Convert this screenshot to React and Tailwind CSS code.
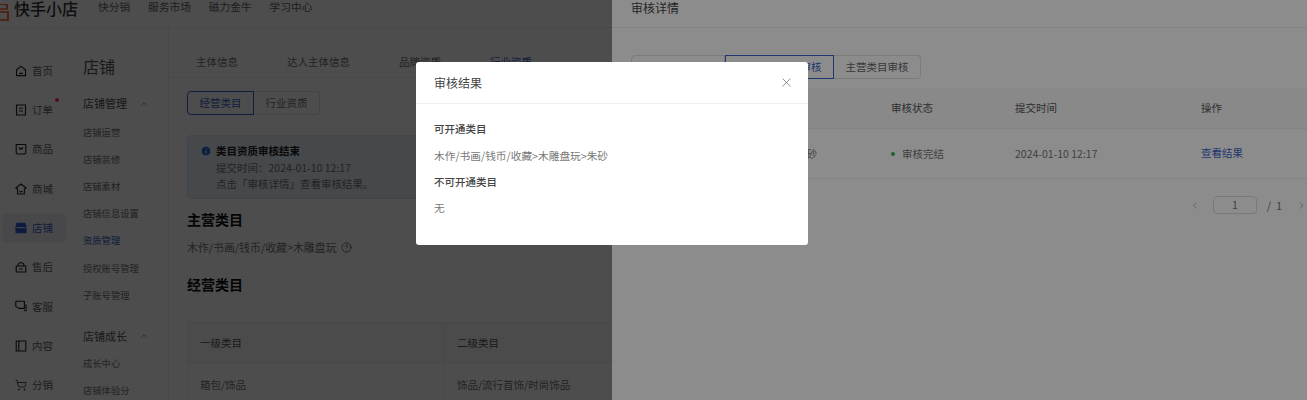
import { ShoppingCart, ChevronUp, ChevronLeft, ChevronRight, X, Info, CircleHelp } from 'lucide-react';

const FONT = 'font-["Noto_Sans_CJK_SC","Noto_Sans",sans-serif]';

// sidebar icons drawn to follow the reference's strokes
function Glyph({ children, filled }) {
  return (
    <svg width="12" height="12" viewBox="0 0 12 12" fill="none" stroke={filled ? '#2a5bd0' : '#222'} strokeWidth="1.1" strokeLinejoin="round" className="shrink-0">
      {children}
    </svg>
  );
}

const HomeIcon = () => <Glyph><path d="M1.5 5 6 1.2 10.5 5v5.6h-9zM4.2 8.4h3.6" /></Glyph>;
const OrderIcon = () => <Glyph><path d="M1.5 1h9v10h-9zM4 4.2h4M4 7h4" /></Glyph>;
const GoodsIcon = () => <Glyph><path d="M1.2 1.5h9.6v8l-1 1.5H2.2l-1-1.5zM4 4.5 6 6.5l2-2" /></Glyph>;
const MallIcon = () => <Glyph><path d="M.8 5 6 1l5.2 4-1.8 1v5H2.6V6zM4.6 8.6h2.8" /></Glyph>;
const ShopIcon = () => <Glyph filled><path d="M2 1.2h8l1 4v5.6H1V5.2z" fill="#2a5bd0" /><path d="M1.5 5.6h9" stroke="#dfe5f2" /></Glyph>;
const AfterIcon = () => <Glyph><path d="M1.2 5h9.6v6H1.2zM3.2 5V3.2Q6-.2 8.8 3.2V5M4.2 8h3.6" /></Glyph>;
const ServiceIcon = () => <Glyph><path d="M.8 1.2h8.6v7.2H3.8L.8 6.4zM11 4.5v6.3H9" /></Glyph>;
const ContentIcon = () => <Glyph><path d="M1.2 1h9.6v10H1.2zM3.8 1v10" /></Glyph>;
const CartIcon = () => <ShoppingCart size={12} strokeWidth={1.5} className="text-[#222] shrink-0" />;

const sideItems = [
  { label: '首页', Icon: HomeIcon },
  { label: '订单', Icon: OrderIcon, dot: true },
  { label: '商品', Icon: GoodsIcon },
  { label: '商城', Icon: MallIcon },
  { label: '店铺', Icon: ShopIcon, active: true },
  { label: '售后', Icon: AfterIcon },
  { label: '客服', Icon: ServiceIcon },
  { label: '内容', Icon: ContentIcon },
  { label: '分销', Icon: CartIcon },
];

const navLinks = ['快分销', '服务市场', '磁力金牛', '学习中心'];
const subItems = ['店铺运营', '店铺装修', '店铺素材', '店铺信息设置', '资质管理', '授权账号管理', '子账号管理'];

function Sidebar() {
  return (
    <div className="w-[70px] shrink-0 pt-[23px] pl-[2px]">
      {sideItems.map(({ label, Icon, dot, active }) => (
        <div key={label} className="h-[39.3px] flex items-center">
          <div className={`relative w-[64px] h-[30px] rounded-md flex items-center pl-[13px] gap-[5px] ${active ? 'bg-[#eef1f8]' : ''}`}>
            <Icon />
            <span className={`text-[10.5px] ${active ? 'text-[#3a63c8]' : 'text-[#666]'}`}>{label}</span>
            {dot && <span className="absolute left-[53px] top-[3px] w-[4px] h-[4px] rounded-full bg-[#fe3666]" />}
          </div>
        </div>
      ))}
    </div>
  );
}

function NavGroup({ title }) {
  return (
    <div className="h-[27px] flex items-center gap-[12px] text-[11px] text-[#555]">
      {title}
      <ChevronUp size={10} className="text-[#888]" />
    </div>
  );
}

function SubNav() {
  return (
    <div className="w-[99px] shrink-0 pl-[13px] border-r border-[#f0f0f0] pt-[26px]">
      <div className="text-[16px] leading-[24px] text-[#555]">店铺</div>
      <div className="mt-[12px]"><NavGroup title="店铺管理" /></div>
      <div className="mt-[2px]">
        {subItems.map((t) => (
          <div key={t} className={`h-[27.2px] flex items-center text-[9.3px] whitespace-nowrap ${t === '资质管理' ? 'text-[#3a63c8]' : 'text-[#777]'}`}>{t}</div>
        ))}
      </div>
      <div className="mt-[13px]"><NavGroup title="店铺成长" /></div>
      <div className="mt-[1px]">
        {['成长中心', '店铺体验分'].map((t) => (
          <div key={t} className="h-[27.2px] flex items-center text-[9.3px] text-[#777] whitespace-nowrap">{t}</div>
        ))}
      </div>
    </div>
  );
}

function MainContent() {
  return (
    <div className="flex-1 min-w-0">
      <div className="h-[50px] pt-[19px] border-b border-[#f0f0f0] flex items-center pl-[27px] text-[10.5px] text-[#777] whitespace-nowrap">
        <span className="w-[91px]">主体信息</span>
        <span className="w-[112px]">达人主体信息</span>
        <span className="w-[91px]">品牌资质</span>
        <span className="text-[#3a63c8]">行业资质</span>
      </div>
      <div className="pl-[18px] pr-[20px]">
        <div className="flex mt-[13px] text-[10.5px]">
          <div className="w-[67px] h-[24px] border border-[#3a63c8] text-[#3a63c8] flex items-center justify-center rounded-l-sm">经营类目</div>
          <div className="w-[66px] h-[24px] border border-l-0 border-[#e5e5e5] text-[#777] flex items-center justify-center rounded-r-sm">行业资质</div>
        </div>
        <div className="mt-[20px] h-[64px] w-[430px] bg-[#e8f2fb] border border-[#dbe8f4] rounded-sm pl-[12px] pt-[7px] text-[10.5px] leading-[16.5px] text-[#777]">
          <div className="flex items-center gap-[4px] font-bold text-[#222]">
            <Info size={12} className="fill-[#2a6fd0] text-white" />
            类目资质审核结束
          </div>
          <div className="pl-[16px]">提交时间：2024-01-10 12:17</div>
          <div className="pl-[16px]">点击「审核详情」查看审核结果。</div>
        </div>
        <div className="mt-[10px] text-[14px] leading-[20px] font-bold text-[#111]">主营类目</div>
        <div className="mt-[10px] flex items-center gap-[4px] text-[10.9px] leading-[16px] text-[#777]">
          木作/书画/钱币/收藏&gt;木雕盘玩
          <CircleHelp size={11} className="text-[#666]" />
        </div>
        <div className="mt-[19px] text-[14px] leading-[20px] font-bold text-[#111]">经营类目</div>
        <div className="mt-[28px] w-[470px] border border-[#f0f0f0] text-[10.5px]">
          <div className="flex h-[41px] items-center bg-[#fafafa] text-[#555] border-b border-[#f0f0f0]">
            <div className="w-[257px] pl-[12px] h-full flex items-center border-r border-[#f0f0f0]">一级类目</div>
            <div className="pl-[12px]">二级类目</div>
          </div>
          <div className="flex h-[41px] items-center text-[#777]">
            <div className="w-[257px] pl-[12px] h-full flex items-center border-r border-[#f0f0f0]">箱包/饰品</div>
            <div className="pl-[12px]">饰品/流行首饰/时尚饰品</div>
          </div>
        </div>
      </div>
    </div>
  );
}

function Drawer() {
  return (
    <div className="absolute top-0 bottom-0 left-[612px] right-0 bg-white">
      <div className="h-[28px] border-b border-[#eee] pl-[19px] pt-[1px] flex items-start text-[12px] leading-[14px] text-[#444]">审核详情</div>
      <div className="flex mt-[27px] ml-[19px] text-[10.5px] text-[#666]">
        <div className="w-[94px] h-[24px] border border-[#e0e0e0] flex items-center justify-center rounded-l-sm">全部审核</div>
        <div className="w-[109px] h-[24px] border border-[#3a63c8] text-[#3a63c8] flex items-center justify-center">行业资质类目审核</div>
        <div className="w-[87px] h-[24px] border border-l-0 border-[#e0e0e0] flex items-center justify-center rounded-r-sm">主营类目审核</div>
      </div>
      <div className="mt-[9px] text-[10.5px]">
        <div className="flex h-[41px] items-center border-b border-[#eee] text-[#555] bg-[#fafafa]">
          <div className="w-[279px] pl-[19px]">类目</div>
          <div className="w-[124px]">审核状态</div>
          <div className="w-[186px]">提交时间</div>
          <div>操作</div>
        </div>
        <div className="flex h-[50px] items-center border-b border-[#eee] text-[#777]">
          <div className="w-[279px] flex justify-end pr-[74px] whitespace-nowrap">木雕盘玩&gt;朱砂</div>
          <div className="w-[124px] flex items-center gap-[7px]">
            <span className="w-[4px] h-[4px] rounded-full bg-[#2fb457]" />
            审核完结
          </div>
          <div className="w-[186px]">2024-01-10 12:17</div>
          <div className="text-[#3a63c8] -mt-[1px]">查看结果</div>
        </div>
      </div>
      <div className="flex items-center mt-[17px] pl-[578px] text-[11px] text-[#777]">
        <ChevronLeft size={11} className="text-[#aaa] mr-[13px]" />
        <div className="w-[48px] h-[18px] border border-[#ddd] rounded-sm flex items-center justify-center text-[10.5px]">1</div>
        <span className="ml-[10px] whitespace-nowrap">/&nbsp;&nbsp;1</span>
        <ChevronRight size={11} className="text-[#aaa] ml-[14px] shrink-0" />
      </div>
    </div>
  );
}

function ResultModal() {
  return (
    <div className="absolute left-[416px] top-[62px] w-[392px] h-[183px] bg-white rounded-[3px]">
      <div className="h-[42px] border-b border-[#eee] flex items-center justify-between pl-[18px] pr-[14px]">
        <span className="text-[12px] text-[#444]">审核结果</span>
        <X size={15} strokeWidth={1} className="text-[#555]" />
      </div>
      <div className="pl-[18px] pt-[15px] text-[10.7px] leading-[20px]">
        <div className="font-medium text-[10.5px] text-[#444]">可开通类目</div>
        <div className="mt-[7px] text-[#777]">木作/书画/钱币/收藏&gt;木雕盘玩&gt;朱砂</div>
        <div className="mt-[6px] font-medium text-[10.5px] text-[#444]">不可开通类目</div>
        <div className="mt-[6px] text-[#777]">无</div>
      </div>
    </div>
  );
}

export default function App() {
  return (
    <div className={`relative w-[1307px] h-[400px] overflow-hidden bg-white ${FONT}`}>
      <div className="-mt-[14px]">
        <div className="h-[42px] pt-[2px] flex items-center border-b border-[#f4f4f4]">
          <svg width="9" height="17" viewBox="0 0 9 17" className="shrink-0 mr-[5px] mt-[10px]" fill="none" stroke="#ff5a1f" strokeWidth="1.7">
            <path d="M-4 1 Q4 -1 7 1 V5 H-4 M-6 8 H8 V16 H-6" />
          </svg>
          <span className="text-[16px] font-medium text-[#333] whitespace-nowrap w-[84px]">快手小店</span>
          <div className="flex gap-[18px] text-[10.7px] text-[#666] whitespace-nowrap">
            {navLinks.map((t) => <span key={t}>{t}</span>)}
          </div>
        </div>
        <div className="flex">
          <Sidebar />
          <SubNav />
          <MainContent />
        </div>
      </div>
      <div className="absolute inset-0 bg-black/45" />
      <Drawer />
      <div className="absolute inset-0 bg-black/45" />
      <ResultModal />
    </div>
  );
}
